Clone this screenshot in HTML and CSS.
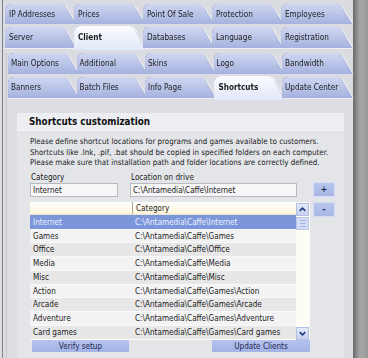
FILE: index.html
```html
<!DOCTYPE html>
<html>
<head>
<meta charset="utf-8">
<link rel="stylesheet" href="styles.css">
</head>
<body>
<div class="window">
  <div class="main">
    <div class="tabs-outer">
      <div class="tabrow">
        <div class="tab">IP Addresses</div>
        <div class="tab">Prices</div>
        <div class="tab">Point Of Sale</div>
        <div class="tab">Protection</div>
        <div class="tab">Employees</div>
      </div>
      <div class="tabrow">
        <div class="tab">Server</div>
        <div class="tab sel">Client</div>
        <div class="tab">Databases</div>
        <div class="tab">Language</div>
        <div class="tab">Registration</div>
      </div>
    </div>
    <div class="outer-panel">
      <div class="inner">
        <div class="tabs-inner">
          <div class="tabrow">
            <div class="tab">Main Options</div>
            <div class="tab">Additional</div>
            <div class="tab">Skins</div>
            <div class="tab">Logo</div>
            <div class="tab">Bandwidth</div>
          </div>
          <div class="tabrow">
            <div class="tab">Banners</div>
            <div class="tab">Batch Files</div>
            <div class="tab">Info Page</div>
            <div class="tab sel">Shortcuts</div>
            <div class="tab">Update Center</div>
          </div>
        </div>
        <div class="panel">
          <div class="group">
            <div class="group-head">Shortcuts customization</div>
            <div class="group-body">
              <p class="desc">Please define shortcut locations for programs and games available to customers.<br>Shortcuts like .lnk, .pif, .bat should be copied in specified folders on each computer.<br>Please make sure that installation path and folder locations are correctly defined.</p>
              <div class="labels">
                <span class="lbl-cat">Category</span>
                <span class="lbl-loc">Location on drive</span>
              </div>
              <div class="inputs">
                <div class="field f-cat">Internet</div>
                <div class="field f-loc">C:\Antamedia\Caffe\Internet</div>
                <div class="sbtn plus">+</div>
              </div>
              <div class="listrow">
                <div class="list">
                  <div class="cols">
                    <div class="lhead"><div class="h1"></div><div class="h2">Category</div></div>
                    <div class="row sel"><span class="c1">Internet</span><span class="c2">C:\Antamedia\Caffe\Internet</span></div>
                    <div class="row"><span class="c1">Games</span><span class="c2">C:\Antamedia\Caffe\Games</span></div>
                    <div class="row"><span class="c1">Office</span><span class="c2">C:\Antamedia\Caffe\Office</span></div>
                    <div class="row"><span class="c1">Media</span><span class="c2">C:\Antamedia\Caffe\Media</span></div>
                    <div class="row"><span class="c1">Misc</span><span class="c2">C:\Antamedia\Caffe\Misc</span></div>
                    <div class="row"><span class="c1">Action</span><span class="c2">C:\Antamedia\Caffe\Games\Action</span></div>
                    <div class="row"><span class="c1">Arcade</span><span class="c2">C:\Antamedia\Caffe\Games\Arcade</span></div>
                    <div class="row"><span class="c1">Adventure</span><span class="c2">C:\Antamedia\Caffe\Games\Adventure</span></div>
                    <div class="row"><span class="c1">Card games</span><span class="c2">C:\Antamedia\Caffe\Games\Card games</span></div>
                  </div>
                  <div class="vscroll">
                    <div class="arrow"><svg width="12" height="11" viewBox="0 0 12 11"><polyline points="3,7 6,4 9,7" fill="none" stroke="#1f3a86" stroke-width="1.7"/></svg></div>
                    <div class="thumb"><i></i><i></i><i></i></div>
                    <div class="track"></div>
                    <div class="arrow"><svg width="12" height="11" viewBox="0 0 12 11"><polyline points="3,4 6,7 9,4" fill="none" stroke="#1f3a86" stroke-width="1.7"/></svg></div>
                  </div>
                </div>
                <div class="sbtn minus">-</div>
              </div>
              <div class="btnrow">
                <div class="btn verify">Verify setup</div>
                <div class="btn update">Update Clients</div>
              </div>
            </div>
          </div>
        </div>
      </div>
    </div>
  </div>
  <div class="rightbar"></div>
</div>
</body>
</html>
```
FILE: styles.css
```css
* { box-sizing: border-box; margin: 0; padding: 0; }
html, body { width: 368px; height: 358px; overflow: hidden; }
body {
  background: #dcdee3;
  font-family: "DejaVu Sans Condensed", "Liberation Sans", sans-serif;
  font-size: 8.1px;
  color: #1b1b1b;
}
.window { display: flex; width: 368px; height: 358px; }
.main {
  width: 351px;
  margin-left: 2px;
  border-left: 1px solid #7f8187;
  display: flex;
  flex-direction: column;
  background: #dadce1;
}
.rightbar {
  flex: 1;
  background: linear-gradient(to right, #6a6a6a 0, #7b7b7b 2px, #a0a0a0 6px, #a7a7a7 9px, #979797 100%);
}

/* tabs */
.tabs-outer { padding: 4px 0 0 2px; }
.tabrow {
  display: flex;
  height: 20px;
  filter: drop-shadow(0 0 0.6px rgba(70, 82, 140, 0.8)) drop-shadow(1px 0 0 rgba(255, 255, 255, 0.75));
}
.tabrow + .tabrow { margin-top: 3px; height: 21px; }
.tab {
  width: 71px;
  flex: none;
  margin-right: -2px;
  padding: 1px 0 0 4px;
  line-height: 19px;
  background: linear-gradient(#d0d7f1, #a6b2df);
  border-radius: 6px 0 0 0;
  clip-path: polygon(0 0, calc(100% - 15px) 0, calc(100% - 11px) 2px, 100% 100%, 0 100%);
  white-space: nowrap;
}
.tab.sel {
  background: linear-gradient(#fbfcff, #e1e8f8);
  font-weight: bold;
  margin-top: -1px;
  height: 24px;
  padding-top: 2px;
}

.outer-panel {
  border-top: 1px solid #eef0f4;
  padding: 4px 0 0 3px;
  flex: 1;
  display: flex;
  flex-direction: column;
}
.inner {
  flex: 1;
  border-left: 1px solid #c4c6cc;
  display: flex;
  flex-direction: column;
}
.tabs-inner { padding-left: 1px; }
.tabs-inner .tabrow { height: 21px; }
.tabs-inner .tab { width: 70.5px; padding-left: 3px; }
.tabs-inner .tab.sel { padding-left: 5px; }

.panel {
  flex: 1;
  border-top: 1px solid #eceef2;
  background: #dcdee3;
  padding: 14px 0 0 10px;
}
.group {
  width: 327px;
  height: 260px;
  background: #e3e5e9;
}
.group-head {
  height: 18px;
  line-height: 17px;
  padding-left: 12px;
  font-weight: bold;
  font-size: 9.8px;
  color: #111;
  background: #eceef1;
  border-bottom: 1px solid #f3f4f6;
}
.group-body { padding-left: 13px; }
.desc { margin-top: 6px; line-height: 10.6px; color: #222; white-space: nowrap; font-size: 7.9px; }
.labels { margin-top: 3px; height: 10px; line-height: 10px; display: flex; }
.lbl-cat { width: 100px; padding-left: 1px; }
.lbl-loc { padding-left: 1px; }
.inputs { display: flex; align-items: flex-start; height: 14px; margin-top: 1px; }
.field {
  height: 14px;
  line-height: 12px;
  border: 1px solid #b8bac0;
  background: #f6f6f7;
  padding-left: 2px;
  white-space: nowrap;
}
.f-cat { width: 88px; margin-right: 12px; }
.f-loc { width: 167px; }
.sbtn {
  width: 22px;
  height: 15px;
  margin-left: 16px;
  margin-top: -1px;
  background: linear-gradient(#b9c6ee, #a7b6e5);
  border: 1px solid #d6ddf3;
  text-align: center;
  line-height: 12px;
  font-weight: bold;
  font-size: 9px;
  color: #1c2a55;
}
.minus { margin-left: 3px; margin-top: 0; }

.listrow { display: flex; align-items: flex-start; margin-top: 5px; }
.list {
  width: 280px;
  height: 138px;
  display: flex;
  background: #fdfcf5;
}
.cols { width: 266px; }
.lhead {
  display: flex;
  height: 13px;
  line-height: 13px;
  background: linear-gradient(#ffffff, #fdf5d9);
  border-bottom: 1px solid #e7e3d2;
}
.h1 { width: 103px; border-right: 1px solid #a9a9a9; }
.h2 { padding-left: 3px; color: #222; }
.row {
  display: flex;
  height: 13.75px;
  line-height: 13px;
  background: #e7e7e8;
  border-top: 1px solid #f9f9f9;
  white-space: nowrap;
}
.row:nth-child(odd) { background: #f3f3f4; }
.row.sel { background: #7c96da; color: #eef2ff; border-top-color: #7c96da; }
.c1 { width: 103px; padding-left: 3px; }
.c2 { padding-left: 2px; }

.vscroll {
  width: 14px;
  display: flex;
  flex-direction: column;
  padding-top: 1px;
}
.arrow {
  height: 13px;
  width: 13px;
  background: linear-gradient(#e4eaf9, #c6d1f0);
  border: 1px solid #b3c0e6;
  display: flex;
  align-items: center;
  justify-content: center;
}
.thumb {
  height: 13px;
  width: 13px;
  margin-top: 1px;
  background: #d4ddf5;
  border: 1px solid #bcc8ea;
  display: flex;
  flex-direction: column;
  align-items: center;
  justify-content: center;
  gap: 2px;
}
.thumb i { display: block; width: 6px; height: 1px; background: #a4b3de; }
.track { flex: 1; }

.btnrow { display: flex; height: 12px; }
.btn {
  height: 12px;
  line-height: 12px;
  text-align: center;
  background: linear-gradient(#b4c2ee, #a3b3e5);
  color: #1c2850;
}
.verify { width: 97px; margin-left: 2px; }
.update { width: 98px; margin-left: 83px; }
```
